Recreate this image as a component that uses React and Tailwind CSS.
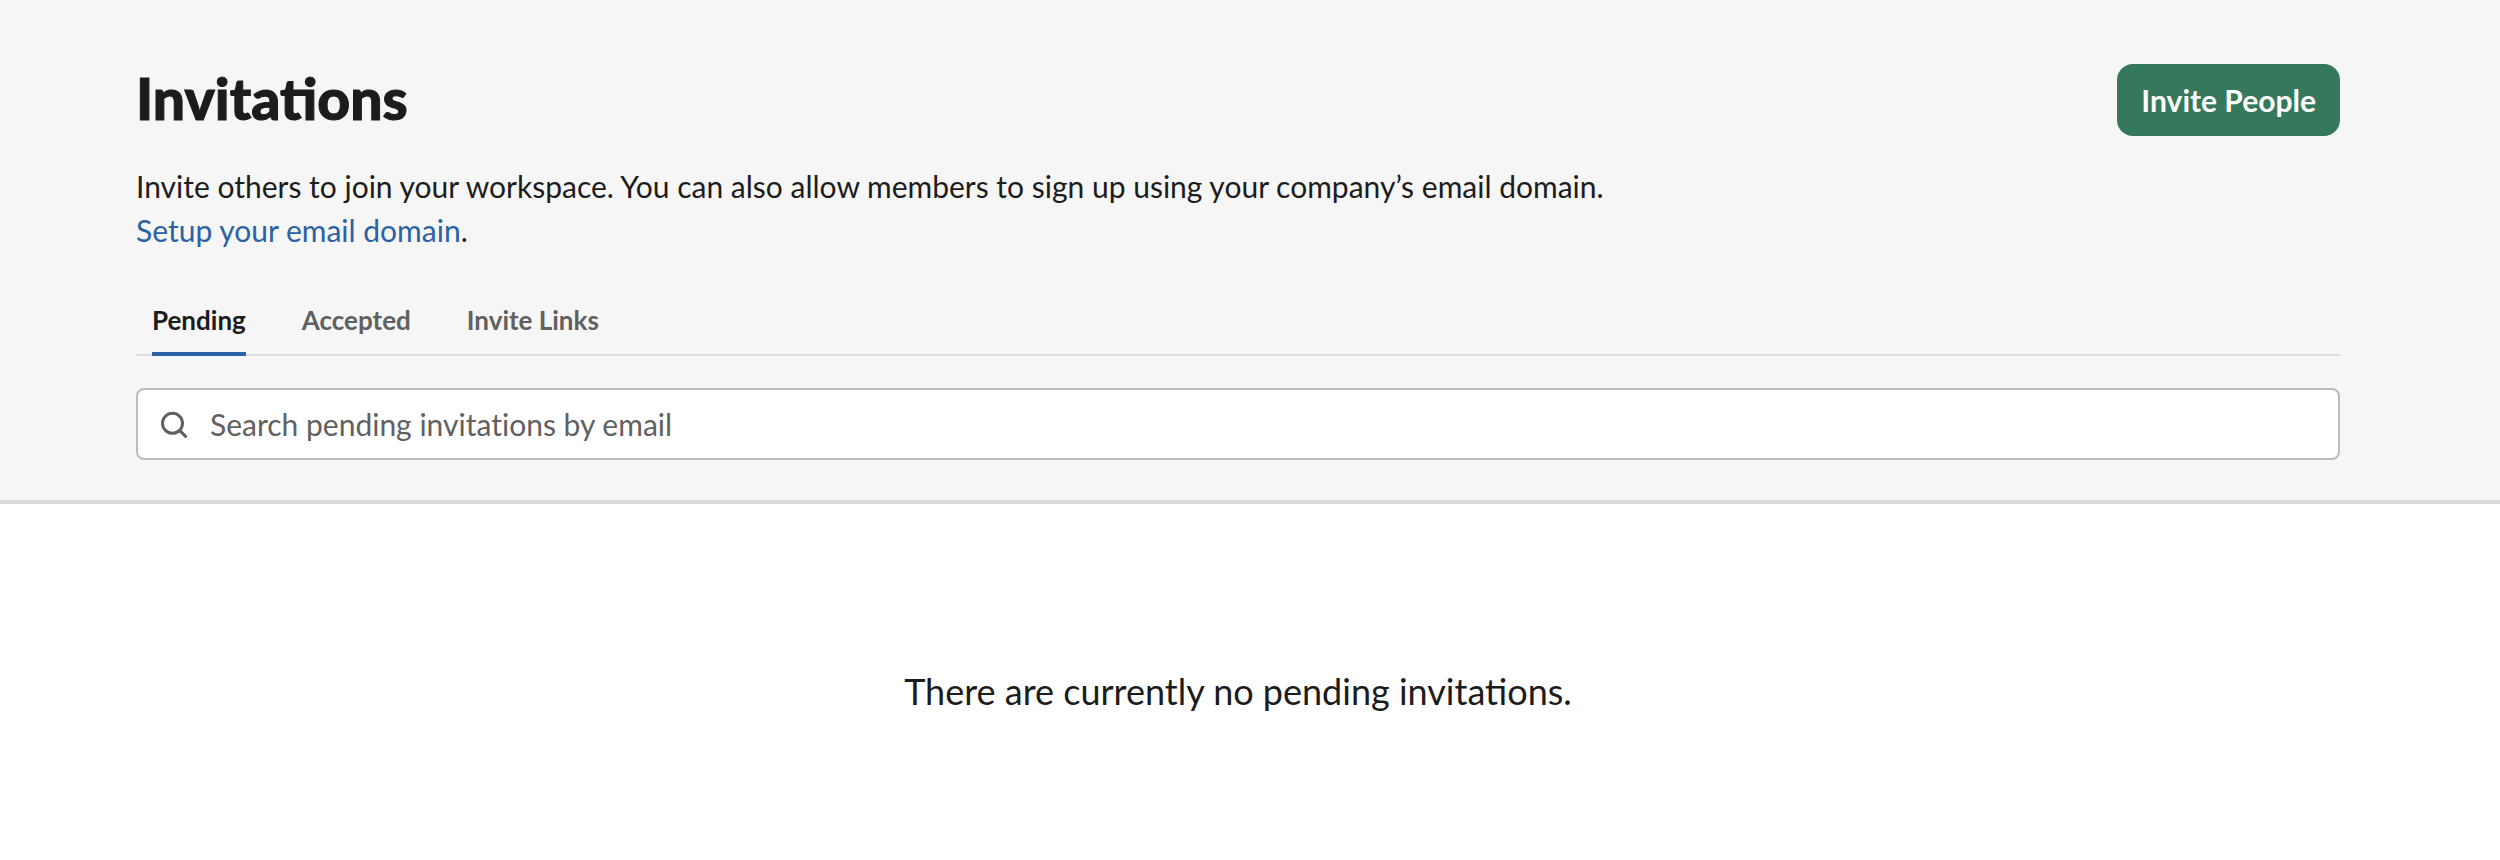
import React from "react";

const tabs = ["Pending", "Accepted", "Invite Links"];

function SearchIcon() {
  return (
    <svg className="h-8 w-8 shrink-0 text-[#616061]" viewBox="0 0 32 32" fill="none" stroke="currentColor" strokeWidth="3" strokeLinecap="round" aria-hidden="true">
      <circle cx="14.5" cy="15.3" r="10" />
      <path d="M21.8 22.6 27.6 28.4" />
    </svg>
  );
}

export default function App() {
  return (
    <div className="font-[Lato,sans-serif] text-[#1d1c1d] antialiased">
      <header className="border-b-4 border-[#dadada] bg-[#f6f6f6] pr-40 pl-34 pt-16 pb-10">
        <div className="flex items-start justify-between">
          <h1 className="text-[57px] leading-[68px] font-black [-webkit-text-stroke:1px_#1d1c1d]">Invitations</h1>
          <button className="h-18 rounded-2xl bg-[#35785b] px-6 text-[30px] font-bold text-white">Invite People</button>
        </div>
        <p className="mt-7 text-[30px] leading-[44px]">
          Invite others to join your workspace. You can also allow members to sign up using your company’s email domain.
          <br />
          <a href="#domain" className="text-[#2a62a5]">Setup your email domain</a>.
        </p>
        <nav className="mt-9 flex gap-14 border-b-2 border-[#dddddd] px-4">
          {tabs.map((tab, i) => (
            <button
              key={tab}
              className={`-mb-0.5 border-b-4 pt-3.5 pb-3.5 text-[26px] leading-[36px] font-bold ${i === 0 ? "border-[#2a62a5]" : "border-transparent text-[#616061]"}`}
            >
              {tab}
            </button>
          ))}
        </nav>
        <label className="mt-8 flex h-18 items-center gap-5 rounded-lg border-2 border-[#bbbbbb] bg-white px-5">
          <SearchIcon />
          <input type="text" aria-label="Search pending invitations by email" placeholder="Search pending invitations by email" className="min-w-0 flex-1 bg-transparent text-[30px] [font-variant-ligatures:none] outline-none placeholder:text-[#616061]" />
        </label>
      </header>
      <main className="pr-40 pl-34 pt-40 pb-36 text-center">
        <p className="text-[36px] leading-[54px]">There are currently no pending invitations.</p>
      </main>
    </div>
  );
}
